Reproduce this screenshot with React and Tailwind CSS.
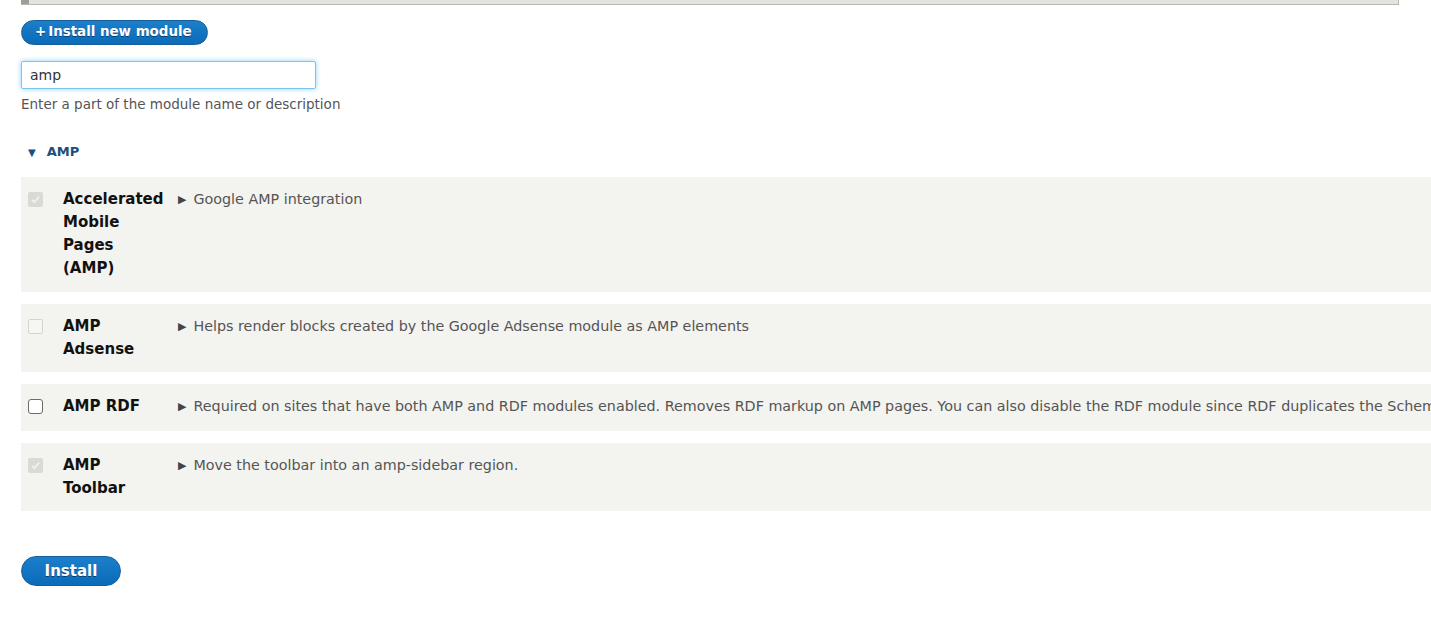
import React from "react";

const font = { fontFamily: '"DejaVu Sans", "Liberation Sans", sans-serif' };

function Check({ kind }) {
  if (kind === "disabledChecked") {
    return (
      <span className="flex h-[15px] w-[15px] items-center justify-center rounded-[2px] bg-[#d9d9d6]">
        <svg width="11" height="11" viewBox="0 0 12 12">
          <path d="M2.2 6.4 L4.8 9 L9.8 3" fill="none" stroke="#f2f2ef" strokeWidth="2" />
        </svg>
      </span>
    );
  }
  if (kind === "disabled") {
    return <span className="block h-[15px] w-[15px] rounded-[2px] border border-[#d3d3d0] bg-[#f6f6f3]" />;
  }
  return <span className="block h-[15px] w-[15px] rounded-[3px] border-[1.5px] border-[#6b6b6b] bg-white" />;
}

const rows = [
  { name: "Accelerated Mobile Pages (AMP)", desc: "Google AMP integration", kind: "disabledChecked" },
  { name: "AMP Adsense", desc: "Helps render blocks created by the Google Adsense module as AMP elements", kind: "disabled" },
  { name: "AMP RDF", desc: "Required on sites that have both AMP and RDF modules enabled. Removes RDF markup on AMP pages. You can also disable the RDF module since RDF duplicates the Schema.org markup provided by AMP metadata.", kind: "enabled" },
  { name: "AMP Toolbar", desc: "Move the toolbar into an amp-sidebar region.", kind: "disabledChecked" },
];

export default function App() {
  return (
    <div className="min-h-[636px] w-[1431px] overflow-hidden bg-white text-[#333]" style={font}>
      <div className="ml-[21px] flex h-[5px] w-[1378px] border-b border-r border-[#b9b9b4] bg-[#e4e4df]">
        <div className="h-full w-[8px] bg-[#9d9d9a]" />
      </div>

      <div className="pl-[21px]">
        <button className="mt-[15px] flex h-[25px] items-center rounded-full border border-[#1a5d96] bg-gradient-to-b from-[#1b7fcc] to-[#0a6bb8] pl-[13px] pr-[15px] text-[13.4px] font-bold text-white [text-shadow:0_1px_0_rgba(0,0,0,0.45)]">
          <span className="mr-[2px]">+</span>Install new module
        </button>

        <div className="mt-[16px] flex h-[28px] w-[295px] items-center rounded-[2px] border border-[#7cc4f2] bg-white pl-[8px] text-[14px] text-[#333] shadow-[0_0_5px_rgba(64,182,255,0.6)]">
          amp
        </div>
        <div className="mt-[5px] text-[13.5px] text-[#555]">Enter a part of the module name or description</div>

        <div className="mt-[28px] flex items-center pl-[7px] text-[13px] font-bold text-[#1b4f7e]">
          <span className="mr-[11px] text-[10px]">▼</span>AMP
        </div>

        <div className="mt-[15px] flex flex-col gap-[12px]">
          {rows.map((r, i) => (
            <div
              key={i}
              className={`flex w-[1420px] overflow-hidden bg-[#f3f3ef] pl-[7px] pt-[11px] ${i === 0 ? "pb-[12px]" : i === 2 ? "pb-[13px]" : "pb-[11px]"}`}
            >
              <div className="w-[35px] shrink-0 pt-[4px]">
                <Check kind={r.kind} />
              </div>
              <div className="mr-[12px] w-[103px] shrink-0 text-[15px] font-bold leading-[23px] text-[#111]">{r.name}</div>
              <div className="flex shrink-0 items-start whitespace-nowrap text-[14.3px] leading-[23px] text-[#555]">
                <span className="mr-[7px] text-[11px] text-[#444]">▶</span>
                {r.desc}
              </div>
            </div>
          ))}
        </div>

        <button className="mt-[45px] flex h-[30px] w-[100px] items-center justify-center rounded-full border border-[#1a5d96] bg-gradient-to-b from-[#1b7fcc] to-[#0a6bb8] text-[15px] font-bold text-white [text-shadow:0_1px_0_rgba(0,0,0,0.45)]">
          Install
        </button>
      </div>
    </div>
  );
}
